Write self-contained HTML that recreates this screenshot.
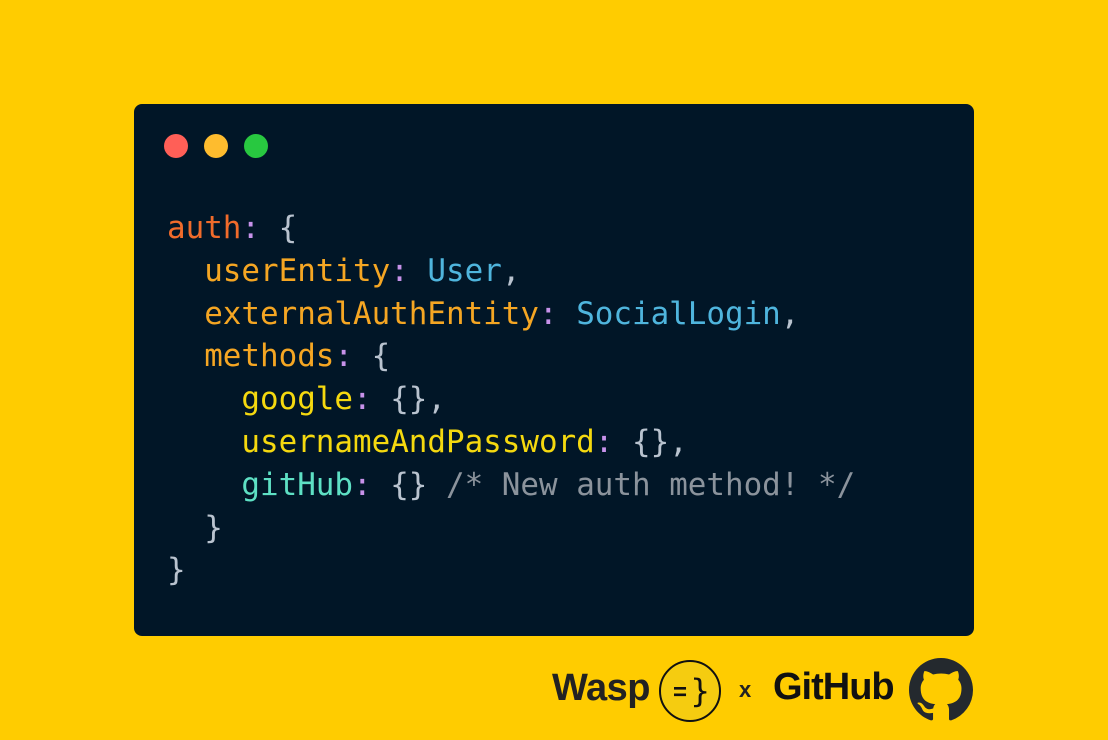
<!DOCTYPE html>
<html><head><meta charset="utf-8"><style>
html,body{margin:0;padding:0}
body{width:1108px;height:740px;background:#ffcc00;position:relative;overflow:hidden;font-family:"Liberation Sans",sans-serif}
.card{position:absolute;left:134px;top:104px;width:840px;height:532px;background:#011627;border-radius:8px}
.dot{position:absolute;top:134px;width:24px;height:24px;border-radius:50%}
pre{position:absolute;left:167px;top:207px;margin:0;font-family:"DejaVu Sans Mono","Liberation Mono",monospace;font-size:30.9px;line-height:42.8px;color:#b9c3cf}
.o{color:#f06b2b}.k{color:#f5a623}.b{color:#4fb5dd}.y{color:#f5d90f}.t{color:#5ee0c4}.c{color:#c792ea}.g{color:#8b939c}
.wasp{position:absolute;left:552px;top:667px;font-weight:bold;font-size:38px;color:#222;letter-spacing:-0.5px}
.gh{position:absolute;left:773px;top:666px;font-weight:bold;font-size:38px;color:#111;letter-spacing:-1px}
.x{position:absolute;left:739px;top:677px;font-weight:bold;font-size:22px;color:#222}
</style></head><body>
<div class="card"></div>
<div class="dot" style="left:164px;background:#ff5f57"></div>
<div class="dot" style="left:204px;background:#febc2e"></div>
<div class="dot" style="left:244px;background:#28c840"></div>
<pre><span class="o">auth</span><span class="c">:</span> {
  <span class="k">userEntity</span><span class="c">:</span> <span class="b">User</span>,
  <span class="k">externalAuthEntity</span><span class="c">:</span> <span class="b">SocialLogin</span>,
  <span class="k">methods</span><span class="c">:</span> {
    <span class="y">google</span><span class="c">:</span> {},
    <span class="y">usernameAndPassword</span><span class="c">:</span> {},
    <span class="t">gitHub</span><span class="c">:</span> {} <span class="g">/* New auth method! */</span>
  }
}</pre>
<div class="wasp">Wasp</div>
<svg style="position:absolute;left:658px;top:659px" width="64" height="64" viewBox="0 0 64 64">
<circle cx="32" cy="32" r="30" fill="#f5cc10" stroke="#111" stroke-width="2"/>
<text x="15" y="41" font-family="Liberation Sans" font-weight="bold" font-size="24" fill="#111">=</text>
<text x="32" y="43" font-family="DejaVu Sans" font-size="32" fill="#111">}</text>
</svg>
<div class="x">x</div>
<div class="gh">GitHub</div>
<svg style="position:absolute;left:909px;top:658px" width="64" height="64" viewBox="0 0 16 16">
<path fill="#24292e" d="M8 0C3.58 0 0 3.58 0 8c0 3.54 2.290 6.53 5.47 7.59.4.07.55-.17.55-.38 0-.19-.01-.82-.01-1.49-2.01.37-2.53-.49-2.690-.94-.09-.23-.48-.94-.82-1.13-.28-.15-.68-.52-.01-.53.63-.01 1.08.58 1.23.82.72 1.21 1.87.87 2.33.66.07-.52.28-.87.51-1.07-1.78-.2-3.640-.89-3.640-3.95 0-.87.31-1.59.82-2.15-.08-.2-.36-1.02.08-2.12 0 0 .67-.21 2.2.82.64-.18 1.32-.27 2-.27.68 0 1.36.09 2 .27 1.53-1.04 2.2-.82 2.2-.82.44 1.1.16 1.92.08 2.12.51.56.82 1.27.82 2.15 0 3.07-1.87 3.75-3.65 3.95.29.25.54.73.54 1.48 0 1.07-.01 1.93-.01 2.2 0 .21.15.46.55.38A8.013 8.013 0 0016 8c0-4.42-3.58-8-8-8z"/>
</svg>
</body></html>
